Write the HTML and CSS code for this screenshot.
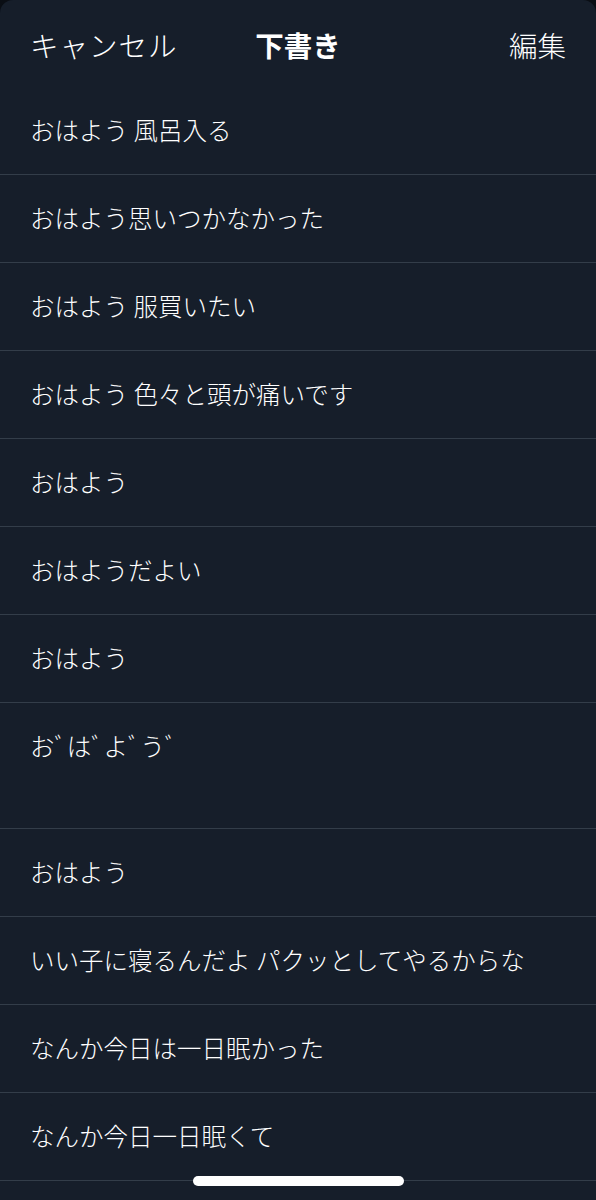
FILE: index.html
```html
<!DOCTYPE html>
<html lang="ja">
<head>
<meta charset="utf-8">
<title>下書き</title>
<link rel="stylesheet" href="styles.css">
</head>
<body>
<div class="sheet">
  <header class="nav">
    <span class="nav-left">キャンセル</span>
    <span class="nav-title">下書き</span>
    <span class="nav-right">編集</span>
  </header>
  <ul class="drafts">
    <li class="draft">おはよう 風呂入る</li>
    <li class="draft">おはよう思いつかなかった</li>
    <li class="draft">おはよう 服買いたい</li>
    <li class="draft">おはよう 色々と頭が痛いです</li>
    <li class="draft">おはよう</li>
    <li class="draft">おはようだよい</li>
    <li class="draft">おはよう</li>
    <li class="draft draft-multi">おﾞはﾞよﾞうﾞ<br>&nbsp;</li>
    <li class="draft">おはよう</li>
    <li class="draft">いい子に寝るんだよ パクッとしてやるからな</li>
    <li class="draft">なんか今日は一日眠かった</li>
    <li class="draft">なんか今日一日眠くて</li>
  </ul>
  <div class="home-indicator"></div>
</div>
</body>
</html>
```
FILE: styles.css
```css
html, body {
  margin: 0;
  padding: 0;
  background: #0a0e14;
}
body {
  width: 596px;
  height: 1200px;
  overflow: hidden;
  font-family: "Noto Sans CJK JP", "Noto Sans", sans-serif;
  color: #ffffff;
}
.sheet {
  position: relative;
  height: 1200px;
  background: #161e2a;
  border-radius: 13px 13px 0 0;
  overflow: hidden;
}
.nav {
  height: 87px;
  box-sizing: border-box;
  padding: 4px 30px 0 30px;
  display: grid;
  grid-template-columns: 1fr auto 1fr;
  align-items: center;
  font-size: 28.5px;
  line-height: 1;
}
.nav-left {
  justify-self: start;
  font-weight: 300;
  letter-spacing: 1px;
}
.nav-title {
  justify-self: center;
  font-weight: 700;
}
.nav-right {
  justify-self: end;
  font-weight: 300;
}
.drafts {
  list-style: none;
  margin: 0;
  padding: 0;
}
.draft {
  padding: 23px 30px 24px 30px;
  font-size: 24.5px;
  font-weight: 300;
  line-height: 40px;
  border-bottom: 1px solid #333d49;
  white-space: nowrap;
}
.draft-multi {
  line-height: 39px;
}
.home-indicator {
  position: absolute;
  left: 193px;
  top: 1176px;
  width: 211px;
  height: 10px;
  border-radius: 5px;
  background: #ffffff;
}
```
